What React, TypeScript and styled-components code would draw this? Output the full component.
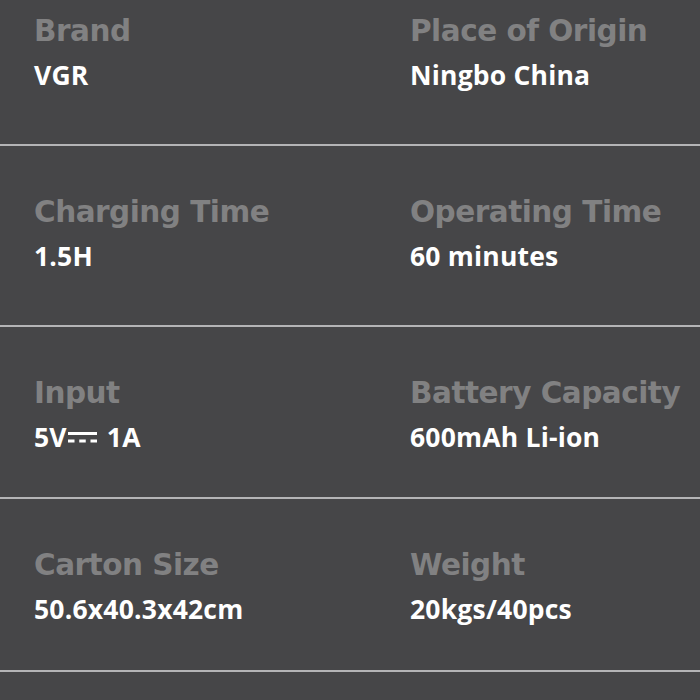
import React from "react";
import styled, { createGlobalStyle } from "styled-components";

const Global = createGlobalStyle`
  html, body { margin: 0; padding: 0; background: #464648; }
  body { width: 700px; height: 700px; overflow: hidden; }
`;

const Page = styled.div`
  width: 700px;
  height: 700px;
  background: #464648;
  overflow: hidden;
  display: flex;
  flex-direction: column;
`;

const Row = styled.div<{ $h: number; $top: number }>`
  flex: none;
  height: ${(p) => p.$h}px;
  margin-top: ${(p) => p.$top}px;
  box-sizing: border-box;
  padding-top: 49px;
  display: grid;
  grid-template-columns: 376px 1fr;
  padding-left: 34px;
  border-bottom: 2px solid #b4b4b6;
`;

const Cell = styled.div`
  display: flex;
  flex-direction: column;
`;

const Label = styled.div`
  font-family: "DejaVu Sans", sans-serif;
  font-weight: 700;
  font-size: 29.5px;
  line-height: 34px;
  color: #818182;
  letter-spacing: -0.5px;
`;

const Value = styled.div`
  font-family: "Open Sans", sans-serif;
  font-weight: 700;
  font-size: 26.5px;
  line-height: 34px;
  margin-top: 10px;
  color: #ffffff;
  display: flex;
  align-items: center;
  letter-spacing: 0.2px;
`;

const Dc = () => (
  <svg width="30" height="15" viewBox="0 0 30 15" style={{ margin: "0 9px 0 1px" }}>
    <rect x="0" y="2" width="29" height="3" fill="#fff" />
    <rect x="0" y="9.5" width="6.5" height="3" fill="#fff" />
    <rect x="11.25" y="9.5" width="6.5" height="3" fill="#fff" />
    <rect x="22.5" y="9.5" width="6.5" height="3" fill="#fff" />
  </svg>
);

const rows: { h: number; top: number; items: [string, React.ReactNode][] }[] = [
  { h: 181, top: -35, items: [["Brand", "VGR"], ["Place of Origin", "Ningbo China"]] },
  { h: 181, top: 0, items: [["Charging Time", "1.5H"], ["Operating Time", "60 minutes"]] },
  {
    h: 172,
    top: 0,
    items: [
      ["Input", <>5V<Dc />1A</>],
      ["Battery Capacity", "600mAh Li-ion"],
    ],
  },
  { h: 173, top: 0, items: [["Carton Size", "50.6x40.3x42cm"], ["Weight", "20kgs/40pcs"]] },
];

export default function App() {
  return (
    <Page>
      <Global />
      {rows.map((r, i) => (
        <Row key={i} $h={r.h} $top={r.top}>
          {r.items.map(([l, v], j) => (
            <Cell key={j}>
              <Label>{l}</Label>
              <Value>{v}</Value>
            </Cell>
          ))}
        </Row>
      ))}
    </Page>
  );
}
